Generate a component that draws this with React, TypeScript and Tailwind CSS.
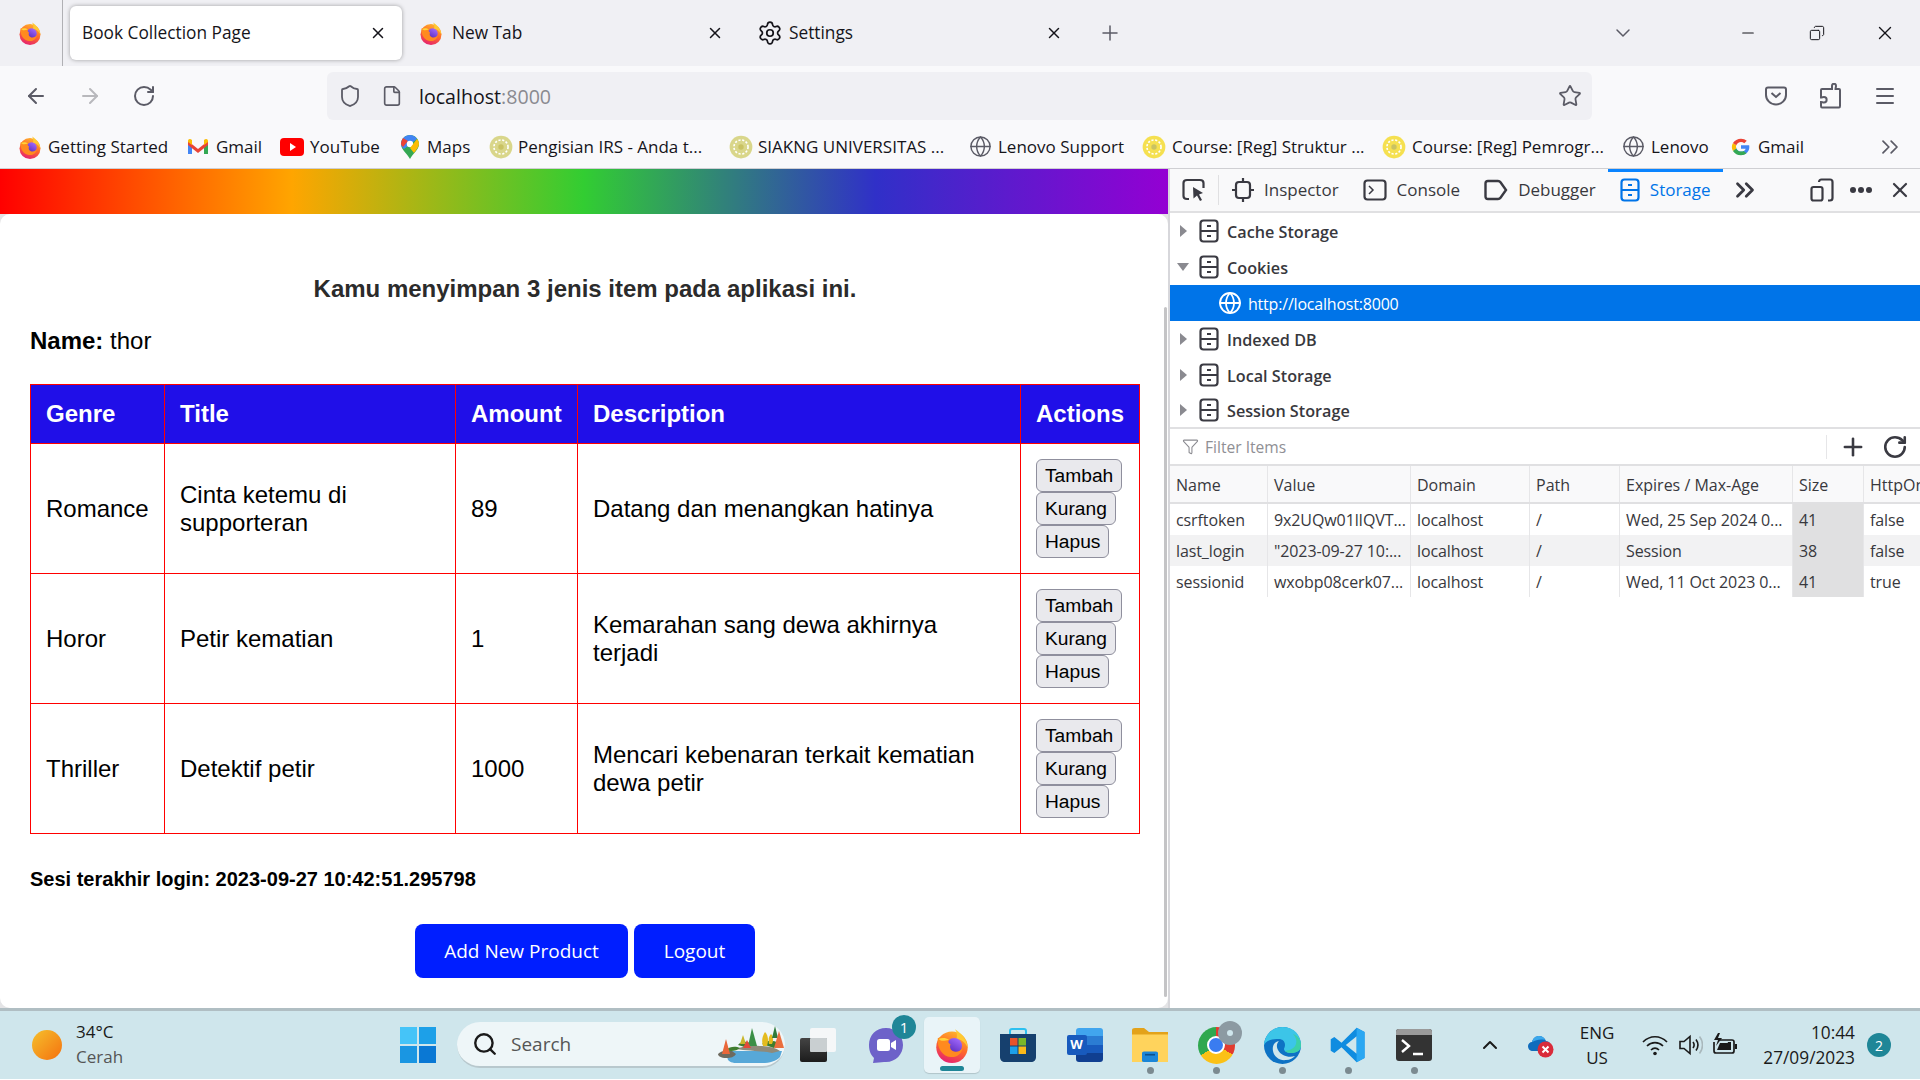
import {
  ArrowLeft,
  ArrowRight,
  ChevronDown,
  ChevronUp,
  ChevronsRight,
  Copy,
  File,
  Filter,
  Globe,
  Menu,
  Minus,
  Plus,
  RotateCw,
  Search,
  Settings,
  Shield,
  Star,
  X,
} from "lucide-react";

const ui = "font-['Open_Sans',sans-serif]";

function Firefox({ size = 24 }: { size?: number }) {
  return (
    <svg width={size} height={size} viewBox="0 0 24 24" className="shrink-0">
      <defs>
        <linearGradient id="ffBody" x1="0.75" y1="0" x2="0.35" y2="1">
          <stop offset="0" stopColor="#ffb92e" />
          <stop offset="0.5" stopColor="#ff6a2a" />
          <stop offset="1" stopColor="#e5226f" />
        </linearGradient>
        <linearGradient id="ffGlobe" x1="0.8" y1="0" x2="0.2" y2="1">
          <stop offset="0" stopColor="#a46cff" />
          <stop offset="1" stopColor="#5526b8" />
        </linearGradient>
      </defs>
      <circle cx="12" cy="13.500" r="10.500" fill="url(#ffBody)" />
      <path d="M14 1.500c3 2 8 5.500 8.500 12.500-1.500-4-5-6-7.500-6 .5-2.500.5-4.500-1-6.500z" fill="#ffc933" />
      <circle cx="13.500" cy="12.500" r="5.200" fill="url(#ffGlobe)" />
      <path d="M2.500 7.500c2.500-1.500 6-1 8 1-1.500.8-1 2.300.5 3-1 2.500.5 5 3.500 5 2 0 3.500-1 4.500-2.500-.5 4-4 6.500-8 6-5.500-.5-9-6-8.500-12.500z" fill="#ff8a1f" />
      <path d="M3 8c2-1 5-1 7 .5-2 .5-4 1-5.500 .5z" fill="#ffd23a" />
    </svg>
  );
}

function Emblem({ color = "#d9d68a" }: { color?: string }) {
  return (
    <svg width="24" height="26" viewBox="0 0 22 24" className="shrink-0">
      <circle cx="11" cy="12" r="10.500" fill={color} />
      <circle cx="11" cy="12" r="6.500" fill="none" stroke="#fff" strokeDasharray="2 1.500" strokeWidth="1.500" />
      <circle cx="11" cy="12" r="2.500" fill="#c9c262" />
    </svg>
  );
}

function GmailIcon() {
  return (
    <svg width="22" height="18" viewBox="0 0 22 18" className="shrink-0">
      <path d="M1 3v13h4V7z" fill="#4285f4" />
      <path d="M21 3v13h-4V7z" fill="#34a853" />
      <path d="M1 3l10 8 10-8v4l-10 8L1 7z" fill="#ea4335" />
      <path d="M1 3c0-2 2-3 4-1v5L1 4zM21 3c0-2-2-3-4-1v5l4-3z" fill="#fbbc04" />
    </svg>
  );
}

function YoutubeIcon() {
  return (
    <svg width="24" height="18" viewBox="0 0 24 18" className="shrink-0">
      <rect width="24" height="18" rx="4" fill="#f00" />
      <path d="M10 5l6 4-6 4z" fill="#fff" />
    </svg>
  );
}

function MapsIcon() {
  return (
    <svg width="18" height="24" viewBox="0 0 18 24" className="shrink-0">
      <path d="M9 0c5 0 9 4 9 9 0 6-6 9-9 15-3-6-9-9-9-15 0-5 4-9 9-9z" fill="#34a853" />
      <path d="M9 0c3 0 6 2 7 4L3 14C1 12 0 11 0 9c0-5 4-9 9-9z" fill="#4285f4" />
      <path d="M2 3l5 3-5 6C1 11 0 10 0 9c0-2 1-4 2-6z" fill="#ea4335" />
      <circle cx="9" cy="9" r="3.200" fill="#fff" />
      <path d="M18 9c0 3-3 6-5 9l-4-5 7-9c1 1 2 3 2 5z" fill="#fbbc04" />
    </svg>
  );
}

function GoogleIcon() {
  return (
    <svg width="20" height="20" viewBox="0 0 48 48" className="shrink-0">
      <path d="M44 24c0-1.500-.1-2.800-.4-4H24v8h11.300c-1 3.400-4.800 7-11.300 7-6.600 0-12-5.400-12-12h-8c0 11 9 20 20 20 11.500 0 20-8 20-19z" fill="#4285f4" />
      <path d="M12 24c0-1.400.2-2.700.7-4l-8-5.600C3 17.300 2 20.600 2 24s1 6.700 2.700 9.600l8-5.600c-.5-1.300-.7-2.600-.7-4z" fill="#fbbc04" />
      <path d="M24 12c3 0 5.700 1 7.800 3l6-6C34.200 5.800 29.500 4 24 4 16 4 8.800 8 4.700 14.400l8 5.600C14.300 15.400 18.800 12 24 12z" fill="#ea4335" />
      <path d="M24 44c5.400 0 10-1.800 13.400-4.800l-7.400-5.700c-1.700 1.100-3.700 1.500-6 1.500-5.200 0-9.700-3.400-11.300-7l-8 5.600C8.800 40 16 44 24 44z" fill="#34a853" />
    </svg>
  );
}

function StorageIcon({ color = "#3a3a42" }: { color?: string }) {
  return (
    <svg width="20" height="24" viewBox="0 0 20 24" className="shrink-0" fill="none" stroke={color} strokeWidth="2.200">
      <rect x="1.500" y="1.500" width="17" height="21" rx="3" />
      <path d="M2 12h16M8 7h4M8 17h4" />
    </svg>
  );
}

function InspectorIcon() {
  return (
    <svg width="22" height="24" viewBox="0 0 22 24" fill="none" stroke="#3a3a42" strokeWidth="2.200" className="shrink-0">
      <rect x="4" y="4" width="14" height="16" rx="3" />
      <path d="M11 0v4M11 20v4M0 12h4M18 12h4" />
    </svg>
  );
}

function ConsoleIcon() {
  return (
    <svg width="24" height="22" viewBox="0 0 24 22" fill="none" stroke="#3a3a42" strokeWidth="2.200" className="shrink-0">
      <rect x="1.500" y="1.500" width="21" height="19" rx="3" />
      <path d="M6 7l4 4-4 4" strokeWidth="1.500" />
    </svg>
  );
}

function DebuggerIcon() {
  return (
    <svg width="24" height="22" viewBox="0 0 24 22" fill="none" stroke="#3a3a42" strokeWidth="2.400" className="shrink-0">
      <path d="M4 2h10c1 0 2 .5 2.500 1.200L22 11l-5.500 7.800c-.5.700-1.500 1.200-2.500 1.200H4c-1.500 0-2.500-1-2.500-2.500v-13C1.500 3 2.500 2 4 2z" />
    </svg>
  );
}

function PickIcon() {
  return (
    <svg width="24" height="24" viewBox="0 0 24 24" fill="none" stroke="#3a3a42" strokeWidth="2.200" className="shrink-0">
      <path d="M7 21H5c-2 0-3.500-1-3.500-3V5c0-2 1.500-3 3.500-3h13c2 0 3.500 1 3.500 3v5" />
      <path d="M11 9l10 6-4 1.500 3 5.500-2 1-3-5.500-3.500 3z" fill="#3a3a42" stroke="none" />
    </svg>
  );
}

function ResponsiveIcon() {
  return (
    <svg width="24" height="24" viewBox="0 0 24 24" fill="none" stroke="#3a3a42" strokeWidth="2.200" className="shrink-0">
      <path d="M9 4c0-1.500 1-2.500 2.500-2.500H20c1.500 0 2.500 1 2.500 2.500v16c0 1.500-1 2.500-2.500 2.500h-2" />
      <rect x="1.500" y="9" width="11" height="13.500" rx="2" />
    </svg>
  );
}

function LakeScene() {
  return (
    <svg width="70" height="40" viewBox="0 0 70 40" className="ml-auto mr-[1px]">
      <path d="M14 27h54l-2 6c-4 4-10 6-18 6H22c-6 0-10-3-8-7z" fill="#57a8d8" />
      <path d="M4 30c2-3 8-4 14-3l4 3c-2 3-5 4-10 4-5 0-8-2-8-4z" fill="#6d6a5f" />
      <path d="M22 25c6-3 16-4 24-3 8 0 16 2 20 5l-8 2c-10-2-24-2-36-4z" fill="#8f8a7a" />
      <path d="M12 26c4-4 10-4 14-2-3 3-10 4-14 2zM24 21c3-4 8-4 12-2l-2 5zM48 20c4-4 12-4 16-1l-4 5z" fill="#3f7d2f" />
      <path d="M34 22l4-18 5 18z" fill="#3b8f46" />
      <path d="M26 20l3-9 3 9z" fill="#c9b62c" />
      <path d="M49 22c-2-6 0-11 2-14 3 3 4 8 2 14zM55 20c-1-5 0-8 2-10 2 2 3 6 1 10z" fill="#e4bb1e" />
      <path d="M58 14l3-12 3 12z" fill="#2f7a3c" />
      <path d="M29 24l4-8 4 8z" fill="#e2493a" />
      <path d="M8 30l4-15 4 15z" fill="#e9673a" />
      <path d="M60 24l5-17 5 17z" fill="#ea6f3e" />
    </svg>
  );
}

const bookmarks = [
  { icon: <Firefox />, label: "Getting Started", gap: "gap-[6px]", width: "w-[169px]" },
  { icon: <GmailIcon />, label: "Gmail", gap: "gap-[7px]", width: "w-[93px]" },
  { icon: <YoutubeIcon />, label: "YouTube", gap: "gap-[6px]", width: "w-[121px]" },
  { icon: <MapsIcon />, label: "Maps", gap: "gap-[8px]", width: "w-[88px]" },
  { icon: <Emblem />, label: "Pengisian IRS - Anda t...", gap: "gap-[5px]", width: "w-[240px]" },
  { icon: <Emblem />, label: "SIAKNG UNIVERSITAS ...", gap: "gap-[5px]", width: "w-[240px]" },
  { icon: <Globe size={23} strokeWidth={1.500} color="#5b5b66" className="shrink-0" />, label: "Lenovo Support", gap: "gap-[6px]", width: "w-[173px]" },
  { icon: <Emblem color="#f5e050" />, label: "Course: [Reg] Struktur ...", gap: "gap-[6px]", width: "w-[240px]" },
  { icon: <Emblem color="#f5e050" />, label: "Course: [Reg] Pemrogr...", gap: "gap-[6px]", width: "w-[240px]" },
  { icon: <Globe size={23} strokeWidth={1.500} color="#5b5b66" className="shrink-0" />, label: "Lenovo", gap: "gap-[6px]", width: "w-[109px]" },
  { icon: <GoogleIcon />, label: "Gmail", gap: "gap-[7px]", width: "w-[80px]" },
];

function Tab({ title, icon, active }: { title: string; icon: React.ReactNode; active?: boolean }) {
  return (
    <div
      className={
        active
          ? "flex items-center w-[332px] h-[54px] bg-white rounded-[6px] shadow-[0_0_4px_rgba(0,0,0,0.35)] pl-[12px] pr-[14px]"
          : "flex items-center w-[332px] h-[54px] pl-[11px] pr-[15px]"
      }
    >
      {icon}
      <span className={`text-[17.3px] text-[#15141a] ${icon ? "ml-[9px]" : ""}`}>{title}</span>
      <X size={18} strokeWidth={2} color="#15141a" className="ml-auto mr-[1px]" />
    </div>
  );
}

function TreeRow({ label, open, short }: { label: string; open?: boolean; short?: boolean }) {
  return (
    <div className={`flex items-center pl-[6px] ${short ? "h-[34px]" : "h-[36px]"}`}>
      {open ? (
        <svg width="14" height="10" viewBox="0 0 14 10" className="shrink-0"><path d="M1 1h12L7 9z" fill="#8a8a90" /></svg>
      ) : (
        <svg width="14" height="12" viewBox="0 0 14 12" className="shrink-0"><path d="M4 0l7 6-7 6z" fill="#8a8a90" /></svg>
      )}
      <span className="ml-[9px]"><StorageIcon /></span>
      <span className="ml-[8px] pt-[2px] text-[16.2px] font-semibold text-[#38383d]">{label}</span>
    </div>
  );
}

const rows = [
  ["csrftoken", "9x2UQw01lIQVT...", "localhost", "/", "Wed, 25 Sep 2024 0...", "41", "false"],
  ["last_login", '"2023-09-27 10:...', "localhost", "/", "Session", "38", "false"],
  ["sessionid", "wxobp08cerk07...", "localhost", "/", "Wed, 11 Oct 2023 0...", "41", "true"],
];

const cols = ["Name", "Value", "Domain", "Path", "Expires / Max-Age", "Size", "HttpOnly"];

const products = [
  { genre: "Romance", title: "Cinta ketemu di supporteran", amount: "89", desc: "Datang dan menangkan hatinya" },
  { genre: "Horor", title: "Petir kematian", amount: "1", desc: "Kemarahan sang dewa akhirnya terjadi" },
  { genre: "Thriller", title: "Detektif petir", amount: "1000", desc: "Mencari kebenaran terkait kematian dewa petir" },
];

function SmallButton({ label }: { label: string }) {
  return (
    <button className="h-[33px] px-[8px] text-[19.2px] leading-none text-black bg-[#e9e9ed] border border-[#8f8f9d] rounded-[6px]">
      {label}
    </button>
  );
}

function Page() {
  return (
    <div className="relative flex-1 bg-[#e4e4e6] min-w-0">
      <div className="h-[45px] bg-[linear-gradient(to_right,#ff0000,#ffa500,#32cd32,#3030c8,#9400d3)]" />
      <div className="h-[794px] bg-white rounded-[10px] font-['Liberation_Sans',sans-serif] text-black pl-[30px]">
        <div className="w-[1110px]">
          <h3 className="pt-[61px] text-center text-[24px] leading-[27px] font-bold text-[#2b2b2b]">
            Kamu menyimpan 3 jenis item pada aplikasi ini.
          </h3>
          <p className="mt-[25px] text-[24px] leading-[28px]">
            <b>Name:</b> thor
          </p>
          <table className="mt-[29px] w-[1109px] table-fixed border-collapse text-[24px] leading-[28px]">
            <colgroup>
              <col className="w-[134px]" />
              <col className="w-[291px]" />
              <col className="w-[122px]" />
              <col className="w-[443px]" />
              <col className="w-[119px]" />
            </colgroup>
            <thead>
              <tr className="h-[59px] bg-[#200fe8] text-white">
                {["Genre", "Title", "Amount", "Description", "Actions"].map((h) => (
                  <th key={h} className="border border-[#f00] px-[15px] text-left font-bold">{h}</th>
                ))}
              </tr>
            </thead>
            <tbody>
              {products.map((p) => (
                <tr key={p.genre} className="h-[130px]">
                  <td className="border border-[#f00] px-[15px]">{p.genre}</td>
                  <td className="border border-[#f00] px-[15px]">{p.title}</td>
                  <td className="border border-[#f00] px-[15px]">{p.amount}</td>
                  <td className="border border-[#f00] px-[15px]">{p.desc}</td>
                  <td className="border border-[#f00] px-[15px]">
                    <div className="flex flex-col items-start">
                      <SmallButton label="Tambah" />
                      <SmallButton label="Kurang" />
                      <SmallButton label="Hapus" />
                    </div>
                  </td>
                </tr>
              ))}
            </tbody>
          </table>
          <p className="mt-[34px] text-[20px] leading-[23px] font-bold">
            Sesi terakhir login: 2023-09-27 10:42:51.295798
          </p>
          <div className={`mt-[33px] flex justify-center gap-[6px] ${ui}`}>
            <button className="h-[54px] w-[213px] rounded-[8px] bg-[#001eff] text-[19px] text-white">Add New Product</button>
            <button className="h-[54px] w-[121px] rounded-[8px] bg-[#001eff] text-[19px] text-white">Logout</button>
          </div>
        </div>
      </div>
      <div className="absolute left-[1164px] top-[138px] h-[690px] w-[3px] rounded-full bg-[#c4c4c6]" />
    </div>
  );
}

function DevTab({ icon, label, active }: { icon: React.ReactNode; label: string; active?: boolean }) {
  return (
    <div className={`flex items-center gap-[10px] h-full px-[12px] ${active ? "border-t-[3px] border-[#0a84ff] pb-[3px]" : ""}`}>
      {icon}
      <span className={`text-[17px] ${active ? "text-[#0074e8]" : "text-[#38383d]"}`}>{label}</span>
    </div>
  );
}

function DevTools() {
  return (
    <div className={`w-[752px] shrink-0 border-l-2 border-[#d7d7db] bg-white ${ui}`}>
      <div className="flex items-center h-[44px] bg-[#f9f9fa] border-b-2 border-[#e0e0e2] pl-[12px] pr-[8px]">
        <PickIcon />
        <div className="ml-[12px] h-[30px] w-px bg-[#e0e0e2]" />
        <div className="flex items-center h-full ml-[1px]">
          <DevTab icon={<InspectorIcon />} label="Inspector" />
          <DevTab icon={<ConsoleIcon />} label="Console" />
          <DevTab icon={<DebuggerIcon />} label="Debugger" />
          <DevTab icon={<StorageIcon color="#0074e8" />} label="Storage" active />
        </div>
        <ChevronsRight size={30} strokeWidth={2.200} color="#3a3a42" className="ml-[7px]" />
        <div className="ml-auto flex items-center gap-[15px]">
          <ResponsiveIcon />
          <svg width="24" height="8" viewBox="0 0 24 8" fill="#3a3a42"><circle cx="4" cy="4" r="3" /><circle cx="12" cy="4" r="3" /><circle cx="20" cy="4" r="3" /></svg>
          <X size={24} strokeWidth={2.200} color="#3a3a42" />
        </div>
      </div>
      <TreeRow label="Cache Storage" />
      <TreeRow label="Cookies" open />
      <div className="flex items-center h-[36px] bg-[#0074e8] pl-[48px] text-white">
        <Globe size={24} strokeWidth={1.800} />
        <span className="ml-[6px] pt-[1px] text-[16px] tracking-[-0.2px]">http://localhost:8000</span>
      </div>
      <TreeRow label="Indexed DB" />
      <TreeRow label="Local Storage" />
      <TreeRow label="Session Storage" short />
      <div className="flex items-center h-[39px] border-t-2 border-b-2 border-[#e0e0e2] pl-[12px] pr-[12px]">
        <Filter size={17} strokeWidth={1.500} color="#8a8a90" />
        <span className="ml-[6px] pt-[3px] text-[15.6px] text-[#8f8f94]">Filter Items</span>
        <div className="ml-auto h-[24px] w-px bg-[#e6e6e8] mr-[12px]" />
        <Plus size={28} strokeWidth={2.200} color="#3a3a42" />
        <RotateCw size={26} strokeWidth={2.400} color="#3a3a42" className="ml-[15px]" />
      </div>
      <div className="grid grid-cols-[97px_143px_119px_90px_173px_71px_1fr] h-[38px] bg-[#f9f9fa] border-b-2 border-[#e0e0e2] overflow-hidden">
        {cols.map((c, i) => (
          <div key={c} className={`flex items-center pl-[6px] pt-[2px] text-[16px] text-[#38383d] whitespace-nowrap overflow-hidden ${i ? "border-l border-[#e6e6e8]" : ""}`}>
            {c}
          </div>
        ))}
      </div>
      {rows.map((r, ri) => (
        <div key={r[0]} className={`grid grid-cols-[97px_143px_119px_90px_173px_71px_1fr] h-[31px] ${ri === 1 ? "bg-[#f2f2f3]" : ""}`}>
          {r.map((v, i) => (
            <div
              key={i}
              className={`flex items-center pl-[6px] text-[16px] tracking-[-0.1px] text-[#38383d] whitespace-nowrap overflow-hidden ${i ? "border-l border-[#e6e6e8]" : ""} ${i === 5 ? "bg-[#e0e0e1]" : ""}`}
            >
              {v}
            </div>
          ))}
        </div>
      ))}
    </div>
  );
}

function TaskIcon({ children, dot }: { children: React.ReactNode; dot?: boolean }) {
  return (
    <div className="relative flex items-center justify-center w-[66px] h-full shrink-0">
      {children}
      {dot && <div className="absolute bottom-[5px] left-[30px] w-[7px] h-[7px] rounded-full bg-[#7b8a90]" />}
    </div>
  );
}

function Taskbar() {
  return (
    <div className={`relative flex items-center h-[71px] bg-[#cfe6ec] border-t-[3px] border-[#b0bec3] ${ui}`}>
      <div className="ml-[32px] w-[30px] h-[30px] rounded-full bg-[linear-gradient(135deg,#f5c02c,#f5710f)]" />
      <div className="ml-[14px] flex flex-col text-[17px] leading-[25px] w-[86px] -mt-[2px]">
        <span className="text-[#1a1a1a]">34°C</span>
        <span className="text-[#555]">Cerah</span>
      </div>
      <svg width="36" height="36" viewBox="0 0 36 36" className="ml-[238px] shrink-0">
        <rect width="17" height="17" fill="#45c4f8" />
        <rect x="19" width="17" height="17" fill="#1da0e8" />
        <rect y="19" width="17" height="17" fill="#1a96e2" />
        <rect x="19" y="19" width="17" height="17" fill="#0a78d4" />
      </svg>
      <div className="ml-[21px] flex items-center w-[328px] h-[46px] rounded-full bg-[#eef6f8] border-b-2 border-[#b8c8cd] pl-[15px] shrink-0">
        <Search size={26} strokeWidth={2.200} color="#1a1a1a" />
        <span className="ml-[13px] text-[19px] text-[#555]">Search</span>
        <LakeScene />
      </div>
      <TaskIcon>
        <div className="relative w-[36px] h-[34px]">
          <div className="absolute right-0 top-0 w-[26px] h-[24px] rounded-[2px] bg-[#f5f7f8]" />
          <div className="absolute left-0 bottom-0 w-[27px] h-[24px] rounded-[2px] bg-[linear-gradient(to_bottom,#444,#1c1c1c)]" />
          <div className="absolute left-[10px] top-[10px] w-[17px] h-[14px] rounded-[1px] bg-[#c9cfd1]" />
        </div>
      </TaskIcon>
      <TaskIcon>
        <svg width="36" height="38" viewBox="0 0 36 38" className="ml-[3px] overflow-visible">
          <path d="M18 2C8 2 1 9 1 19c0 6 2 10 5 13l-1 5c4 0 8-1 11-1h2c10 0 17-8 17-17S28 2 18 2z" fill="#6d62c9" />
          <rect x="9" y="13" width="13" height="12" rx="2.500" fill="#fff" />
          <path d="M23 17l5-3v10l-5-3z" fill="#fff" />
        </svg>
        <div className="absolute top-[4px] left-[41px] flex items-center justify-center w-[24px] h-[24px] rounded-full bg-[#1f8697] text-[15px] text-white">1</div>
      </TaskIcon>
      <div className="relative flex items-center justify-center w-[56px] h-[56px] ml-[7px] mr-[5px] shrink-0 rounded-[5px] bg-[#e9f4f8] shadow-[0_1px_1px_rgba(0,0,0,0.15)]">
        <Firefox size={36} />
        <div className="absolute bottom-[2px] left-[16px] w-[24px] h-[5px] rounded-full bg-[#1f8697]" />
      </div>
      <TaskIcon>
        <svg width="36" height="36" viewBox="0 0 36 36">
          <path d="M10 7V4c0-1 1-2 2-2h12c1 0 2 1 2 2v3" fill="none" stroke="#2cc0f0" strokeWidth="2" />
          <path d="M0 7h36v23c0 3-2 5-5 5H5c-3 0-5-2-5-5z" fill="#16406e" />
          <rect x="10" y="11" width="7.500" height="7.500" fill="#e8532a" />
          <rect x="18.500" y="11" width="7.500" height="7.500" fill="#7bb62a" />
          <rect x="10" y="19.500" width="7.500" height="7.500" fill="#1da0e8" />
          <rect x="18.500" y="19.500" width="7.500" height="7.500" fill="#fbb91a" />
        </svg>
      </TaskIcon>
      <TaskIcon>
        <div className="relative w-[36px] h-[34px] ml-[1px]">
          <div className="absolute right-0 top-0 w-[27px] h-[34px] rounded-[3px] bg-[linear-gradient(to_bottom,#41a5ee_25%,#2b7cd3_25%,#2b7cd3_50%,#185abd_50%,#185abd_75%,#103f91_75%)]" />
          <div className="absolute left-0 top-[7px] w-[20px] h-[20px] flex items-center justify-center rounded-[2px] bg-[#185abd] text-[13px] font-bold text-white">W</div>
        </div>
      </TaskIcon>
      <TaskIcon dot>
        <svg width="36" height="34" viewBox="0 0 36 42" preserveAspectRatio="none">
          <path d="M0 3c0-2 1-3 3-3h9l5 5h19v5H0z" fill="#e3a21a" />
          <path d="M0 8h36v34H0z" fill="#ffd35c" />
          <rect x="10" y="29" width="16" height="13" rx="2" fill="#1a86d8" />
          <rect x="13" y="32" width="10" height="2" fill="#0b4f8a" />
        </svg>
      </TaskIcon>
      <TaskIcon dot>
        <div className="relative w-[37px] h-[37px]">
          <div className="w-[37px] h-[37px] rounded-full bg-[conic-gradient(#e33b2e_0_33%,#fbc116_33%_66%,#2fa84f_66%_100%)] flex items-center justify-center">
            <div className="w-[18px] h-[18px] rounded-full bg-[#3a7cf0] border-2 border-white" />
          </div>
          <div className="absolute -top-[6px] left-[20px] flex items-center justify-center w-[24px] h-[24px] rounded-full bg-[#8c9aa2]">
            <div className="w-[6px] h-[6px] rounded-full bg-[#cfe6ec]" />
          </div>
        </div>
      </TaskIcon>
      <TaskIcon dot>
        <svg width="37" height="37" viewBox="0 0 37 37">
          <circle cx="18.500" cy="18.500" r="18.500" fill="#0e72c4" />
          <path d="M0 18C1 7 9 0 18.500 0 30 0 37 8 37 18c0 6-5 8-10 8-4 0-7-2-7-4 0-1 1-2 1-4 0-4-3-6-6-6C8 12 3 13 0 18z" fill="#3cc5e8" />
          <path d="M37 18c0 6-5 8-10 8-3 0-5-1-6-2 3-1 9-1 11-7 1-3 0-7-3-10 5 2 8 6 8 11z" fill="#3cd0a8" />
          <path d="M15 14c-5 1-7 5-6 10 1 6 7 10 13 9 4 0 7-2 9-4-6 2-14 0-17-6-2-4-1-7 1-9z" fill="#cfe6ec" />
        </svg>
      </TaskIcon>
      <TaskIcon dot>
        <svg width="36" height="38" viewBox="0 0 100 100">
          <path d="M74 2L96 14v72L74 98 32 56 12 72 2 66V34l10-6 20 16z" fill="#0f8ce0" />
          <path d="M74 26L44 50l30 24z" fill="#cfe6ec" />
          <path d="M74 2L96 14v72L74 98z" fill="#2aa7f2" />
        </svg>
      </TaskIcon>
      <TaskIcon dot>
        <div className="w-[36px] h-[32px] rounded-[3px] bg-[#333] overflow-hidden">
          <div className="h-[6px] bg-[#9a9a9a]" />
          <svg width="36" height="26" viewBox="0 0 36 26" fill="none" stroke="#fff" strokeWidth="2.400">
            <path d="M6 5l7 6-7 6M17 19h10" />
          </svg>
        </div>
      </TaskIcon>
      <ChevronUp size={24} strokeWidth={2} color="#1a1a1a" className="ml-[31px]" />
      <svg width="26" height="26" viewBox="0 0 26 26" className="ml-[26px] shrink-0">
        <path d="M5 19c-3 0-5-2-5-5 0-2 2-4 4-4 1-4 4-6 7-6 3 0 6 2 7 5 2 0 3 1 4 2l-6 8z" fill="#0f6cbd" />
        <path d="M4 10c1-4 4-6 7-6 3 0 5 1 6 4-5-1-9 0-13 2z" fill="#3ba8ec" />
        <circle cx="17.500" cy="17.500" r="8" fill="#d92b3a" />
        <path d="M14.500 14.500l6 6M20.500 14.500l-6 6" stroke="#fff" strokeWidth="2" />
      </svg>
      <div className="ml-[24px] flex flex-col items-center text-[17px] leading-[25px] text-[#1a1a1a] w-[38px] -mt-[1px]">
        <span>ENG</span>
        <span>US</span>
      </div>
      <svg width="26" height="22" viewBox="0 0 26 22" fill="none" stroke="#1a1a1a" strokeWidth="1.700" className="ml-[26px] shrink-0">
        <path d="M1 8c7-7 17-7 24 0M5 12c4.500-4.500 11.500-4.500 16 0M9 16c2.500-2.500 5.500-2.500 8 0" />
        <circle cx="13" cy="19.500" r="1.800" fill="#1a1a1a" stroke="none" />
      </svg>
      <svg width="24" height="22" viewBox="0 0 24 22" fill="none" stroke="#1a1a1a" strokeWidth="1.600" className="ml-[11px] shrink-0">
        <path d="M1 7.500h4L11 2.500v17l-6-5H1z" />
        <path d="M14 8c1.500 2 1.500 4 0 6M17 5.500c2.500 3.500 2.500 7.500 0 11" />
        <path d="M20.500 2.500c4 5 4 12 0 17" stroke="#a9b8bc" />
      </svg>
      <svg width="26" height="24" viewBox="0 0 26 24" fill="none" stroke="#1a1a1a" strokeWidth="1.700" className="ml-[9px] shrink-0">
        <path d="M8 7h12c1 0 2 1 2 2v9c0 1-1 2-2 2H4c-1 0-2-1-2-2V9" />
        <path d="M5 17h8l3-8h3v8h-4" fill="#1a1a1a" stroke="none" />
        <path d="M5 17h11V10H8z" fill="#1a1a1a" stroke="none" />
        <path d="M23 11h2v5h-2z" fill="#1a1a1a" stroke="none" />
        <path d="M6 0L2 7h4l-2 6 6-8H6l2-5z" fill="#1a1a1a" stroke="none" />
      </svg>
      <div className="ml-[17px] flex flex-col items-end text-[17.3px] leading-[25px] text-[#1a1a1a] w-[100px]">
        <span>10:44</span>
        <span>27/09/2023</span>
      </div>
      <div className="ml-[12px] flex items-center justify-center w-[24px] h-[24px] rounded-full bg-[#1f8697] text-[14px] text-white">2</div>
    </div>
  );
}

export default function App() {
  return (
    <div className={`flex flex-col w-[1920px] h-[1080px] overflow-hidden ${ui}`}>
      {/* tab strip */}
      <div className="flex items-center h-[66px] bg-[#f0f0f4]">
        <div className="flex items-center justify-center w-[63px] h-full border-r border-[#b0b0b4] pr-[3px]">
          <Firefox />
        </div>
        <div className="ml-[7px] flex gap-[6px]">
          <Tab title="Book Collection Page" icon={null} active />
          <Tab title="New Tab" icon={<Firefox />} />
          <div className="flex items-center w-[332px] h-[54px] pl-[11px] pr-[15px]">
            <Settings size={26} strokeWidth={1.600} color="#15141a" />
            <span className="ml-[6px] text-[17.3px] text-[#15141a]">Settings</span>
            <X size={18} strokeWidth={2} color="#15141a" className="ml-auto" />
          </div>
        </div>
        <Plus size={24} strokeWidth={1.500} color="#5b5b66" className="ml-[20px]" />
        <ChevronDown size={24} strokeWidth={1.500} color="#5b5b66" className="ml-[489px]" />
        <Minus size={18} strokeWidth={1.500} color="#15141a" className="ml-[104px]" />
        <Copy size={16} strokeWidth={1.500} color="#15141a" className="ml-[52px] -scale-x-100" />
        <X size={22} strokeWidth={1.500} color="#15141a" className="ml-[49px]" />
      </div>
      {/* toolbar */}
      <div className="flex items-center h-[54px] bg-[#f9f9fb] pl-[24px] pt-[6px]">
        <ArrowLeft size={24} strokeWidth={2} color="#5b5b66" />
        <ArrowRight size={24} strokeWidth={2} color="#b8b8bc" className="ml-[30px]" />
        <RotateCw size={24} strokeWidth={2} color="#5b5b66" className="ml-[30px]" />
        <div className="ml-[171px] flex items-center w-[1265px] h-[48px] rounded-[6px] bg-[#f0f0f4] pl-[11px] pr-[10px]">
          <Shield size={24} strokeWidth={1.800} color="#5b5b66" />
          <File size={22} strokeWidth={1.800} color="#5b5b66" className="ml-[19px]" />
          <span className="ml-[16px] pt-[1px] text-[19.6px]">
            <span className="text-[#15141a]">localhost</span>
            <span className="text-[#8a8a90]">:8000</span>
          </span>
          <Star size={24} strokeWidth={1.800} color="#5b5b66" className="ml-auto" />
        </div>
        <svg width="22" height="20" viewBox="0 0 22 20" fill="none" stroke="#5b5b66" strokeWidth="2" className="ml-[173px]">
          <path d="M3 1.500h16c1 0 2 1 2 2V9c0 5-4.500 9.500-10 9.500S1 14 1 9V3.500c0-1 1-2 2-2z" />
          <path d="M6.500 7l4.500 4 4.500-4" />
        </svg>
        <svg width="22" height="26" viewBox="0 0 22 26" fill="none" stroke="#5b5b66" strokeWidth="2" className="ml-[32px]">
          <path d="M8 6H13V3c0-3 4-3 4 0 0 1-.5 2-.5 3H20c1 0 1 .5 1 1v16c0 1-.5 1.500-1 1.500H3c-.5 0-1-.5-1-1.500v-4c1 0 2 .5 3 .5 3.500 0 3.500-5.500 0-5.500-1 0-2 .5-3 .5V7c0-.5.5-1 1-1z" />
        </svg>
        <Menu size={24} strokeWidth={2} color="#5b5b66" className="ml-[32px]" />
      </div>
      {/* bookmarks */}
      <div className="flex items-center h-[49px] bg-[#f9f9fb] border-b border-[#cfcfd3] pl-[18px] pt-[5px]">
        {bookmarks.map((b, i) => (
          <div key={i} className={`flex items-center shrink-0 ${b.gap} ${b.width}`}>
            {b.icon}
            <span className="text-[17px] text-[#15141a] whitespace-nowrap">{b.label}</span>
          </div>
        ))}
        <ChevronsRight size={28} strokeWidth={1.500} color="#5b5b66" className="ml-[65px]" />
      </div>
      {/* content */}
      <div className="flex h-[839px]">
        <Page />
        <DevTools />
      </div>
      <Taskbar />
    </div>
  );
}
